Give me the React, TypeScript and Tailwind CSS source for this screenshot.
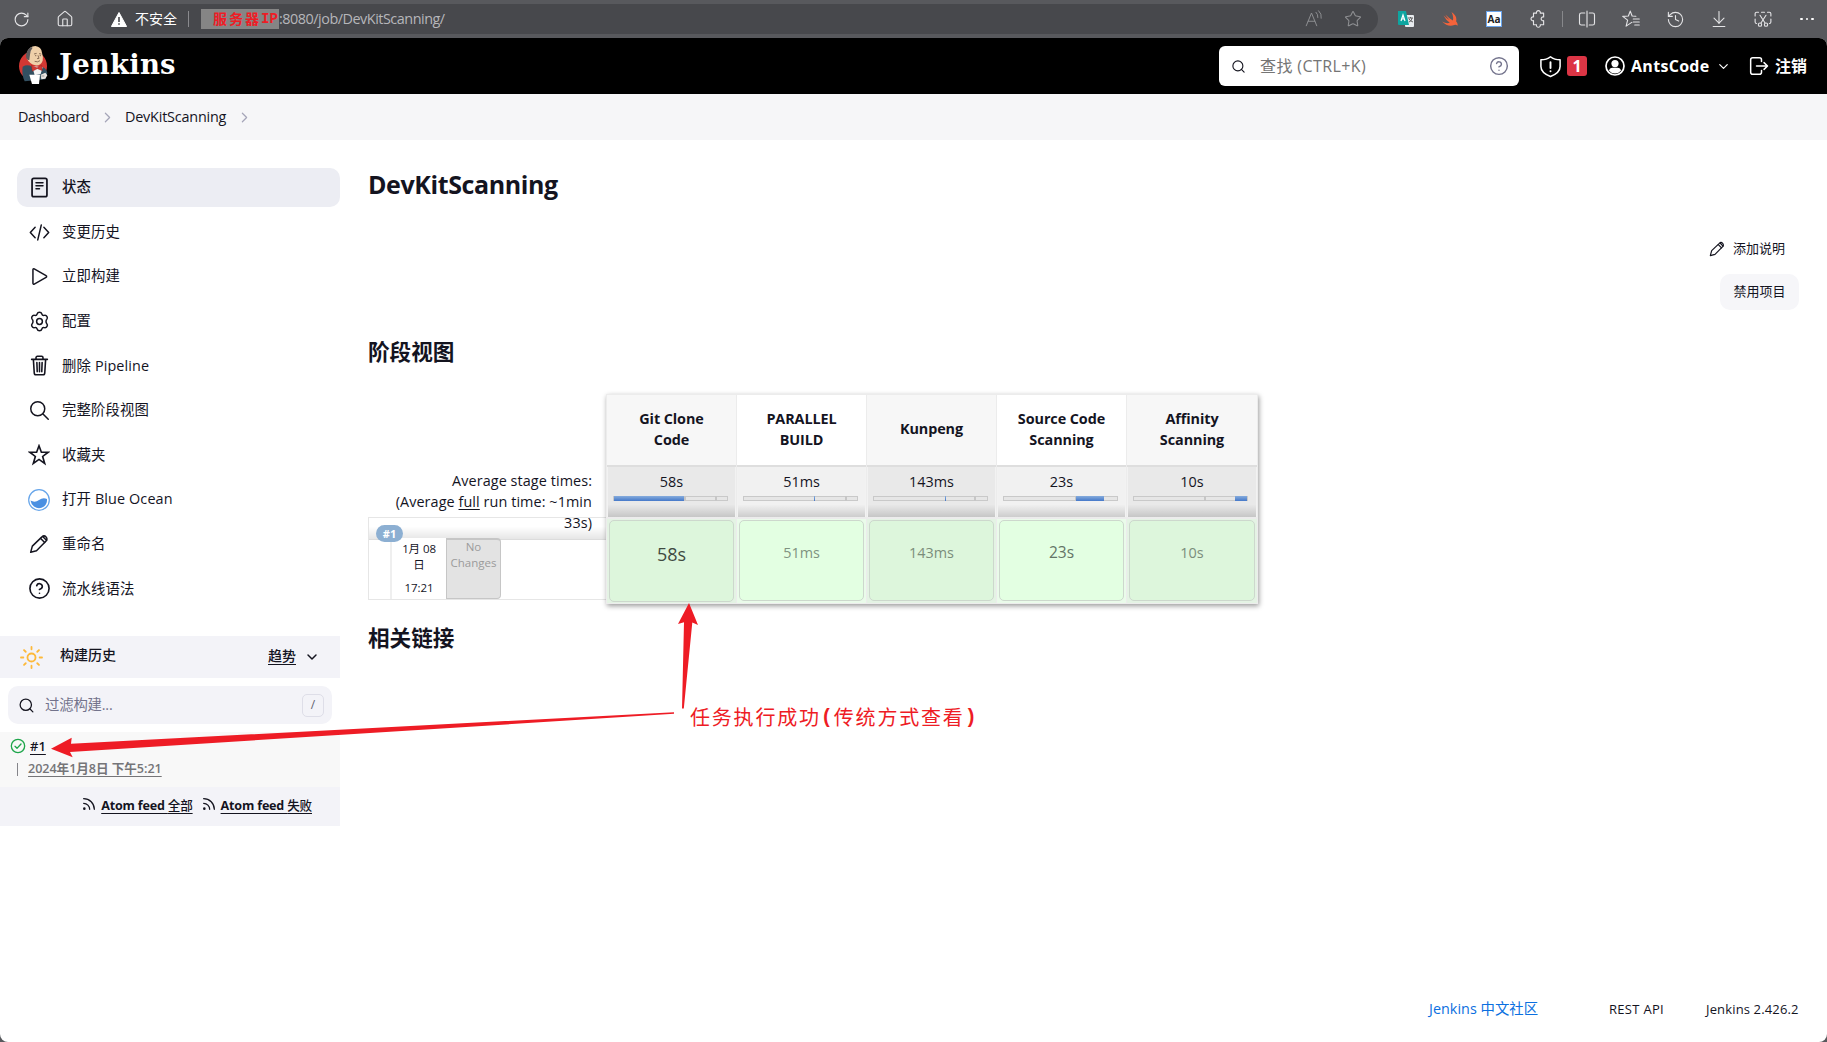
import React from 'react';
import {
  RotateCw, House, Star, History, ArrowDownToLine, Search, ChevronRight, ChevronDown,
  CircleHelp, Rss,
} from 'lucide-react';

type SvgProps = { size?: number; className?: string; children: React.ReactNode; box?: string; sw?: number };

const Svg = ({ size = 20, className = '', children, box = '0 0 24 24', sw = 1.5 }: SvgProps) => (
  <svg
    width={size}
    height={size}
    viewBox={box}
    fill="none"
    stroke="currentColor"
    strokeWidth={sw}
    strokeLinecap="round"
    strokeLinejoin="round"
    className={`shrink-0 ${className}`}
  >
    {children}
  </svg>
);

const Pencil = ({ size = 20 }: { size?: number }) => (
  <Svg size={size} sw={1.8}>
    <path d="M2 22l2-7.500L15.500 3.500a3.200 3.200 0 0 1 5 5L9 20Z" />
    <path d="M14 5.500l4.800 4.800" />
    <path d="M17 3.500l4 4" />
  </Svg>
);

const Mascot = () => (
  <svg width="60" height="50" viewBox="0 0 180 150" className="shrink-0">
    <ellipse cx="69" cy="84" rx="42" ry="44" fill="#d33833" />
    <path d="M38 86Q52 78 66 86L98 88Q110 92 112 106L106 124L44 130Q34 108 38 86Z" fill="#335061" />
    <path d="M66 84l8 28 18-4 6-20z" fill="#f4f4f4" />
    <path d="M51 44Q58 24 76 24Q94 26 96 44Q100 56 98 68Q92 84 76 82Q58 78 52 64Z" fill="#efd0a9" />
    <path d="M48 56Q48 38 62 28Q66 27 68 29Q60 38 60 50L58 66Q50 66 48 56Z" fill="#5d5a5c" />
    <path d="M72 48l8-2M87 47l7 1M75 53h4M89 53h4M84 52l3 9-6 1M74 70q9 4 16-2" stroke="#5b4031" strokeWidth="2" fill="none" />
    <path d="M64 82l17 7 14-8 2 17-15-6-15 8z" fill="#d33833" stroke="#7c1f1c" strokeWidth="1" />
    <path d="M58 110h32l-3 28H66Z" fill="#fff" />
    <path d="M92 110l14-6 6 8-6 10-12 2z" fill="#e8e4e0" />
    <path d="M94 114h9" stroke="#777" strokeWidth="2" />
  </svg>
);

/* Browser toolbar */
const Slot = ({ children }: { children: React.ReactNode }) => (
  <div className="flex w-[44px] shrink-0 items-center justify-center">{children}</div>
);

const BrowserBar = () => (
  <div className="flex h-[38px] items-center bg-[#58595d] text-[#e4e4e6]">
    <div className="flex w-[93px] shrink-0 items-center">
      <div className="flex w-[43px] justify-center"><RotateCw size={17} strokeWidth={1.6} /></div>
      <Slot><House size={18} strokeWidth={1.5} /></Slot>
    </div>
    <div className="flex h-[30px] w-[1285px] shrink-0 items-center rounded-full bg-[#47484c]">
      <svg width="16" height="15" viewBox="0 0 16 15" className="ml-[18px]">
        <path d="M8 0.500L15.600 14.500H0.400Z" fill="#fff" stroke="#fff" strokeLinejoin="round" />
        <path d="M8 5v5M8 11.300v1.500" stroke="#47484c" strokeWidth="1.600" />
      </svg>
      <span className="ml-[8px] text-[14px] leading-none text-white">不安全</span>
      <div className="ml-[11px] h-[16px] w-px bg-[#8a8a8e]" />
      <div className="ml-[12px] flex h-[20px] w-[78px] items-center bg-[#858585] pl-[12px] leading-none text-[#ee1c25]">
        <span className="text-[14px] font-bold tracking-[2px]">服务器</span>
        <span className="font-['Liberation_Mono'] text-[14px] font-bold">IP</span>
      </div>
      <span className="text-[14.400px] leading-none tracking-[-0.480px] text-[#b6b6ba]">:8080/job/DevKitScanning/</span>
      <div className="ml-auto mr-[5px] flex text-[#8f9093]">
        <div className="flex w-[40px] justify-center">
          <Svg size={18} sw={1.3}>
            <path d="M3 21L10 4l7 17M5.500 15h9M16 3q3 3 2.500 7M19.500 1q4.500 4 3.500 10" />
          </Svg>
        </div>
        <div className="flex w-[40px] justify-center"><Star size={18} strokeWidth={1.4} /></div>
      </div>
    </div>
    <div className="ml-[6px] flex shrink-0 items-center">
      <Slot>
        <svg width="16" height="17" viewBox="0 0 16 17">
          <rect x="7" y="4" width="9" height="12" rx="1" fill="#e9ecef" />
          <path d="M0 0h8l3 14H1a1 1 0 0 1-1-1z" fill="#0ea5a0" />
          <path d="M3 10l2-6 2 6M3.500 8h3" stroke="#fff" fill="none" strokeWidth="1.200" />
          <path d="M10 7h5M12.500 6v1M11 11q3-1 3-4M11 8q1 2 4 3" stroke="#555" fill="none" strokeWidth=".9" />
        </svg>
      </Slot>
      <Slot>
        <svg width="17" height="16" viewBox="0 0 17 16">
          <path d="M9.500 1q6 4 4.600 9.200 2 2.500 1.400 4.600-1.300-1.500-3.200-.8Q6 16.500 0 10.500q4.500 2.600 7.800 1.300Q4 9 1.500 4.500 5 7.700 7.500 9 5 6.500 3.300 3.500q4 4 7.500 6Q12 6 9.500 1Z" fill="#f5633a" />
        </svg>
      </Slot>
      <Slot>
        <div className="flex h-[16px] w-[16px] items-center justify-center border border-[#6aa5ee] bg-white text-[10px] font-bold leading-none text-[#222]">Aa</div>
      </Slot>
      <Slot>
        <Svg size={18}>
          <path d="M6 5h4a2.600 2.600 0 1 1 5 0h4.500v5a2.600 2.600 0 1 0 0 5v5.500H15a2.600 2.600 0 1 1-5 0H6V15a2.600 2.600 0 1 1 0-5Z" transform="translate(0 -.8)" />
        </Svg>
      </Slot>
    </div>
    <div className="ml-[2px] h-[16px] w-px shrink-0 bg-[#87888b]" />
    <div className="ml-[2px] flex shrink-0 items-center">
      <Slot>
        <Svg size={18} sw={1.5}>
          <path d="M9 4H4.500A2.500 2.500 0 0 0 2 6.500v11A2.500 2.500 0 0 0 4.500 20H9M15 4h4.500A2.500 2.500 0 0 1 22 6.500v11a2.500 2.500 0 0 1-2.500 2.500H15M12 1.500v21" />
        </Svg>
      </Slot>
      <Slot>
        <Svg size={18} sw={1.5}>
          <path d="M13 16.500l-7.500 5 2-8L1 8.500l7.500-.5L11 1.500 13.500 8l5 .4M15 12h8M15 16h8M17 20h6" />
        </Svg>
      </Slot>
      <Slot><History size={19} strokeWidth={1.4} /></Slot>
      <Slot><ArrowDownToLine size={20} strokeWidth={1.3} /></Slot>
      <Slot>
        <Svg size={18} sw={1.5}>
          <path d="M1.500 8V5A2 2 0 0 1 3.500 3H6M10 3h4M18 3h2.500a2 2 0 0 1 2 2v3M22.500 12v4a2 2 0 0 1-2 2M1.500 12v4a2 2 0 0 0 2 2M8 7l6.500 10M16 7L9.500 17" />
          <circle cx="8" cy="19.500" r="2.200" />
          <circle cx="16" cy="19.500" r="2.200" />
        </Svg>
      </Slot>
      <Slot>
        <div className="flex gap-[3px]">
          <i className="h-[2.500px] w-[2.500px] rounded-full bg-white" />
          <i className="h-[2.500px] w-[2.500px] rounded-full bg-white" />
          <i className="h-[2.500px] w-[2.500px] rounded-full bg-white" />
        </div>
      </Slot>
    </div>
  </div>
);

const Header = () => (
  <header className="flex h-[56px] items-center rounded-t-[8px] bg-black text-white">
    <div className="ml-[10px] flex h-full w-[49px] items-start"><Mascot /></div>
    <div className="-mt-[2px] font-['DejaVu_Serif'] text-[27.500px] font-bold leading-none tracking-[0.180px]">Jenkins</div>
    <div className="ml-auto flex h-[40px] w-[300px] items-center rounded-[6px] bg-white text-[#757575]">
      <Search size={15} strokeWidth={1.8} className="ml-[12px] text-[#14141f]" />
      <span className="ml-[14px] text-[16px] leading-none tracking-[0.400px]">查找 (CTRL+K)</span>
      <CircleHelp size={20} strokeWidth={1.7} className="ml-auto mr-[10px] text-[#73738c]" />
    </div>
    <div className="ml-[20px] flex items-center">
      <Svg size={23} sw={1.6}>
        <path d="M12 1.800Q16 5 22 5v7q0 6.500-10 10.500Q2 18.500 2 12V5q6 0 10-3.200Z" />
        <path d="M12 7.500v6M12 16.800v.2" strokeWidth="2" />
      </Svg>
      <span className="ml-[5px] flex h-[20px] w-[20px] items-center justify-center rounded-[3px] bg-[#dc3545] text-[16px] font-bold leading-none">1</span>
    </div>
    <div className="ml-[18px] flex w-[126px] items-center">
      <svg width="20" height="20" viewBox="0 0 20 20">
        <circle cx="10" cy="10" r="9" fill="none" stroke="#fff" strokeWidth="1.700" />
        <circle cx="10" cy="7.600" r="3.600" fill="#fff" />
        <path d="M4 14.800Q4.500 11.800 7.500 11.800h5Q15.500 11.800 16 14.800 13.500 17.600 10 17.600T4 14.800Z" fill="#fff" />
      </svg>
      <span className="ml-[6px] text-[16px] font-bold leading-none tracking-[0.300px]">AntsCode</span>
      <ChevronDown size={15} strokeWidth={1.9} className="ml-auto" />
    </div>
    <div className="ml-[18px] mr-[20px] flex w-[58px] items-center">
      <Svg size={20} sw={1.8}>
        <path d="M15 6.500V4.500A2.500 2.500 0 0 0 12.500 2h-8A2.500 2.500 0 0 0 2 4.500v15A2.500 2.500 0 0 0 4.500 22h8a2.500 2.500 0 0 0 2.500-2.500v-2M9 12h13M18 8l4.200 4-4.200 4" />
      </Svg>
      <span className="ml-auto text-[16px] font-bold leading-none">注销</span>
    </div>
  </header>
);

const Gear = () => (
  <Svg size={21} sw={1.7}>
    <path d="M12 1.500c1.600 0 2.300.6 2.700 2 .4 1.300 1.300 1.800 2.600 1.500 1.500-.4 2.500-.1 3.300 1.300s.6 2.400-.4 3.500c-1 1-1 3.400 0 4.400 1 1.100 1.200 2.100.4 3.500s-1.800 1.700-3.300 1.300c-1.300-.3-2.200.2-2.600 1.500-.4 1.400-1.100 2-2.700 2s-2.300-.6-2.700-2C8.900 19.200 8 18.700 6.700 19c-1.500.4-2.500.1-3.300-1.300s-.6-2.400.4-3.500c1-1 1-3.400 0-4.400-1-1.100-1.200-2.100-.4-3.500S5.200 4.600 6.700 5c1.300.3 2.200-.2 2.600-1.500.4-1.400 1.100-2 2.700-2Z" />
    <circle cx="12" cy="12" r="3.300" />
  </Svg>
);

const navItems: { label: string; icon: React.ReactNode }[] = [
  {
    label: '状态',
    icon: (
      <Svg size={21} sw={2}>
        <rect x="3.500" y="1.500" width="17" height="21" rx="2" />
        <path d="M8 6.500h8M8 10h8M8 13.500h4" strokeWidth="1.700" />
      </Svg>
    ),
  },
  { label: '变更历史', icon: <Svg size={21} sw={1.7}><path d="M7 6L1.500 12 7 18M17 6l5.500 6L17 18M14 3.500l-4 17" /></Svg> },
  { label: '立即构建', icon: <Svg size={21} sw={1.7}><path d="M4.500 4.200a1 1 0 0 1 1.500-.9L19.500 11a1.100 1.100 0 0 1 0 2L6 20.700a1 1 0 0 1-1.500-.9Z" /></Svg> },
  { label: '配置', icon: <Gear /> },
  {
    label: '删除 Pipeline',
    icon: (
      <Svg size={21} sw={1.8}>
        <path d="M3 5h18M8 5V3a1.500 1.500 0 0 1 1.500-1.500h5A1.500 1.500 0 0 1 16 3v2M5 5l1 15.500A2 2 0 0 0 8 22.500h8a2 2 0 0 0 2-2L19 5M9 8.500l.4 10.500M12 8.500V19M15 8.500l-.4 10.500" />
      </Svg>
    ),
  },
  { label: '完整阶段视图', icon: <Svg size={21} sw={1.7}><circle cx="10" cy="10" r="8" /><path d="M16 16l6 6" /></Svg> },
  { label: '收藏夹', icon: <Svg size={22} sw={1.8}><path d="M12 2l2.600 7H22l-6 4.600 2.200 7.600L12 16.800l-6.200 4.400L8 13.600 2 9h7.400Z" strokeLinejoin="miter" /></Svg> },
  {
    label: '打开 Blue Ocean',
    icon: (
      <svg width="22" height="22" viewBox="0 0 22 22">
        <circle cx="11" cy="11" r="10.300" fill="#fff" stroke="#66a5ea" strokeWidth="1.200" />
        <path d="M2.500 11.500Q7 14 11 11q4-3 8-1 .4 5-3 7.500-5 3.500-10 0Q3 15 2.500 11.500Z" fill="#4a90e2" />
      </svg>
    ),
  },
  { label: '重命名', icon: <Pencil size={20} /> },
  { label: '流水线语法', icon: <CircleHelp size={23} strokeWidth={1.7} /> },
];

const Nav = () => (
  <nav className="flex flex-col gap-[5.600px] pl-[17px]">
    {navItems.map((n, i) => (
      <div
        key={n.label}
        className={`flex h-[39px] items-center rounded-[10px] ${i === 0 ? 'bg-[#ecedf3] font-medium' : ''}`}
      >
        <div className="mr-px flex w-[44px] justify-center">{n.icon}</div>
        <span className="text-[14.400px] leading-none tracking-[0.120px]">{n.label}</span>
      </div>
    ))}
  </nav>
);

const BuildHistory = () => (
  <section className="mt-[28px]">
    <div className="flex h-[42px] items-center bg-[#f3f3f8]">
      <Svg size={23} sw={1.9} className="ml-[20px] text-[#fdb93a]">
        <circle cx="12" cy="12" r="4.200" />
        <path d="M12 1v2.500M12 20.500V23M1 12h2.500M20.500 12H23M4.200 4.200L6 6M18 18l1.800 1.800M19.800 4.200L18 6M6 18l-1.800 1.800" />
      </Svg>
      <span className="-mt-[4px] ml-[17px] text-[14px] font-medium leading-none">构建历史</span>
      <span className="-mt-[4px] ml-auto text-[14px] font-medium underline underline-offset-[3px]">趋势</span>
      <ChevronDown size={16} strokeWidth={2.2} className="ml-[8px] mr-[20px]" />
    </div>
    <div className="mx-[8px] mt-[8px] flex h-[38px] items-center rounded-[10px] bg-[#f3f3f8]">
      <Search size={17} strokeWidth={1.8} className="ml-[10px]" />
      <span className="ml-[10px] text-[14.400px] leading-none tracking-[-0.200px] text-[#73738c]">过滤构建...</span>
      <span className="ml-auto mr-[8px] flex h-[23px] w-[22px] items-center justify-center rounded-[5px] border border-[#dedee8] text-[12px] leading-none text-[#5f5f70]">/</span>
    </div>
    <div className="mt-[8px] h-[55px] bg-[#f8f8f8]">
      <div className="flex h-[28px] items-center pl-[10px]">
        <Svg size={16} sw={2} className="text-[#1ea64b]">
          <circle cx="12" cy="12" r="10" />
          <path d="M7.500 12.500l3 3 6-6.500" />
        </Svg>
        <span className="-mt-px ml-[4px] text-[13px] font-semibold leading-[18px] underline underline-offset-[3px]">#1</span>
      </div>
      <div className="flex h-[18px] items-center pl-[17px]">
        <div className="h-[13px] w-px bg-[#85858a]" />
        <span className="ml-[10px] text-[12.600px] font-semibold leading-none tracking-[-0.050px] text-[#757578] underline underline-offset-[3px]">
          2024年1月8日 下午5:21
        </span>
      </div>
    </div>
    <div className="flex h-[39px] items-center justify-end bg-[#f3f3f8] pb-[2px] pr-[28px] text-[12.600px] font-bold leading-none">
      {['全部', '失败'].map((t) => (
        <div key={t} className="ml-[8px] flex items-center gap-[4px]">
          <Rss size={16} strokeWidth={1.9} className="-mt-[3px]" />
          <span className="tracking-[-0.200px] underline underline-offset-[3px]">Atom feed <span className="font-medium">{t}</span></span>
        </div>
      ))}
    </div>
  </section>
);

const stages = [
  { name: 'Git Clone Code', time: '58s', start: 0, width: 62, marks: [62, 89], size: 'text-[18px] text-[#3f4a41]' },
  { name: 'PARALLEL BUILD', time: '51ms', start: 62, width: 0.8, marks: [89], size: 'text-[14.400px] text-[#7f9280]' },
  { name: 'Kunpeng', time: '143ms', start: 62.5, width: 0.8, marks: [88.5], size: 'text-[14.400px] text-[#7b8d7b]' },
  { name: 'Source Code Scanning', time: '23s', start: 63.5, width: 25.3, marks: [62.5], size: 'text-[15.500px] text-[#647466]' },
  { name: 'Affinity Scanning', time: '10s', start: 89, width: 11, marks: [62], size: 'text-[14.400px] text-[#7b8d7b]' },
];

const StageTable = () => (
  <div className="flex">
    <div className="flex w-[238px] flex-col">
      <div className="mt-[76px] h-[47px] whitespace-nowrap pr-[14px] text-right text-[14.400px] leading-[21px] tracking-[0.080px]">
        Average stage times:
        <br />
        (Average <u className="underline-offset-2">full</u> run time: ~1min
        <br />
        33s)
      </div>
      <div className="h-[83px] border border-r-0 border-[#e6e6e6]">
        <div className="h-[22px] border-b border-[#dcdcdc] bg-linear-to-b from-transparent from-40% to-black/10" />
        <div className="-mt-[2px] flex h-[61px]">
          <div className="relative w-[23px] border-r-2 border-[#efefef]">
            <span className="absolute -top-[13px] left-[7px] flex h-[17px] w-[27px] items-center justify-center rounded-full bg-[#8cafd2] text-[11px] font-bold leading-none text-white">#1</span>
          </div>
          <div className="flex w-[54px] flex-col items-center bg-white text-[11.500px] leading-[16px] tracking-[-0.100px]">
            <span className="mt-[3px]">1月 08</span>
            <span>日</span>
            <span className="mt-[7px]">17:21</span>
          </div>
          <div className="w-[55px] rounded-br-[4px] rounded-tr-[4px] border border-t-2 border-[#c6c6c6] bg-[#e3e3e3] text-center text-[11.500px] leading-[16px] text-[#9b9b9b]">
            <div className="-mt-px">No Changes</div>
          </div>
        </div>
      </div>
    </div>
    <div className="flex h-[210px] border border-[#ececec] shadow-[1px_2px_5px_rgba(0,0,0,0.4)]">
      {stages.map((s, i) => {
        const odd = i % 2 === 0;
        return (
          <div key={s.name} className="flex w-[130px] flex-col border-r border-[#ececec] last:border-r-0">
            <div className={`flex h-[72px] items-center justify-center border-b-2 border-[#dedede] px-[18px] pb-[3px] text-center text-[14.400px] font-bold leading-[21px] tracking-[-0.080px] ${odd ? 'bg-[#f7f7f7]' : 'bg-white'}`}>
              {s.name}
            </div>
            <div className={`h-[50px] border-x border-[#f2f2f2] ${odd ? 'bg-[#e9e9e9]' : 'bg-[#f1f1f1]'}`}>
              <div className="h-full bg-linear-to-b from-transparent from-75% to-black/15 px-[5px] pt-[4px]">
                <div className="text-center text-[14.400px] leading-[21px]">{s.time}</div>
                <div className="relative mt-[4px] h-[5px] w-[115px] border border-[#c9c9c9] bg-[#e6e6e6]">
                  {s.marks.map((m) => (
                    <div key={m} className="absolute -top-px h-[5px] w-[2px] bg-[#c6c6c6]" style={{ left: `${m}%` }} />
                  ))}
                  <div
                    className="absolute -top-px h-[5px] bg-linear-to-b from-[#86acdc] to-[#4578c9]"
                    style={{ left: `${s.start}%`, width: `${s.width}%` }}
                  />
                </div>
              </div>
            </div>
            <div className={`flex-1 border-t-2 border-[#ececec] px-[2px] pt-px ${i === 0 ? 'pb-px' : 'pb-[2px]'} ${odd ? 'bg-[#e4f3e4]' : 'bg-[#eafbea]'}`}>
              <div className={`flex h-full items-center justify-center rounded-[5px] border border-[#cdd8cd] pb-[15px] leading-none ${odd ? 'bg-[#ddf6dc]' : 'bg-[#e3ffe2]'} ${s.size}`}>
                {s.time}
              </div>
            </div>
          </div>
        );
      })}
    </div>
  </div>
);

const Main = () => (
  <main className="flex min-w-0 flex-1 flex-col pl-[28px]">
    <h1 className="text-[25px] font-bold leading-[32px] tracking-[-0.400px]">DevKitScanning</h1>
    <div className="mt-[31px] flex flex-col items-end pr-[28px] text-[13px] leading-none">
      <div className="flex h-[36px] items-center gap-[8px] pr-[14px] pb-px"><Pencil size={16} />添加说明</div>
      <div className="mt-[7px] flex h-[36px] w-[79px] items-center justify-center rounded-[10px] bg-[#f6f6f9] pb-px">禁用项目</div>
    </div>
    <h2 className="mt-[30px] text-[21.600px] font-bold leading-[24px]">阶段视图</h2>
    <div className="mt-[30px]"><StageTable /></div>
    <h2 className="mt-[22px] text-[21.600px] font-bold leading-[24px]">相关链接</h2>
  </main>
);

/* Red callout arrows with their caption, drawn over the page */
const Callout = () => (
  <div className="pointer-events-none absolute inset-0 text-[#ee1c25]">
    <svg width="1827" height="1042" viewBox="0 0 1827 1042" fill="currentColor">
      <path d="M689 603L698 625L692.300 622.500L683.800 708.500H682L684 622.300L678 624Z" />
      <path d="M51 748.700L71.700 737.700L71 743.700L674 712.300V713.800L70 752L72.700 757.300Z" />
    </svg>
    <div className="absolute left-[690px] top-[707px] flex items-center whitespace-nowrap text-[20px] leading-[22px]">
      <span className="tracking-[1.800px]">任务执行成功</span>
      <span className="w-[13px] font-['Liberation_Mono'] font-bold">(</span>
      <span className="tracking-[1.800px]">传统方式查看</span>
      <span className="font-['Liberation_Mono'] font-bold">)</span>
    </div>
  </div>
);

export default function App() {
  return (
    <div className="relative flex h-[1042px] w-[1827px] flex-col overflow-hidden bg-[#58595d] font-['Open_Sans','Noto_Sans_CJK_SC',sans-serif] text-[#14141f]">
      <BrowserBar />
      <div className="flex flex-1 flex-col rounded-[8px] bg-white">
        <Header />
        <div className="flex h-[46px] items-center bg-[#f6f6f8] pl-[18px] text-[14.400px] leading-none">
          <span className="w-[81px] tracking-[-0.350px]">Dashboard</span>
          <ChevronRight size={17} strokeWidth={1.7} className="text-[#a5a5b8]" />
          <span className="ml-[9px] w-[111px] tracking-[-0.200px]">DevKitScanning</span>
          <ChevronRight size={17} strokeWidth={1.7} className="text-[#a5a5b8]" />
        </div>
        <div className="flex flex-1 pt-[28px]">
          <aside className="w-[340px] shrink-0">
            <Nav />
            <BuildHistory />
          </aside>
          <Main />
        </div>
        <footer className="flex h-[66px] items-center justify-end pr-[28px] text-[13px] leading-none">
          <span className="w-[180px] text-[14.400px] tracking-[0.020px] text-[#0b6fe0]">Jenkins 中文社区</span>
          <span className="w-[97px] tracking-[0.300px]">REST API</span>
          <span className="w-[93px] whitespace-nowrap tracking-[0.150px]">Jenkins 2.426.2</span>
        </footer>
      </div>
      <Callout />
    </div>
  );
}
